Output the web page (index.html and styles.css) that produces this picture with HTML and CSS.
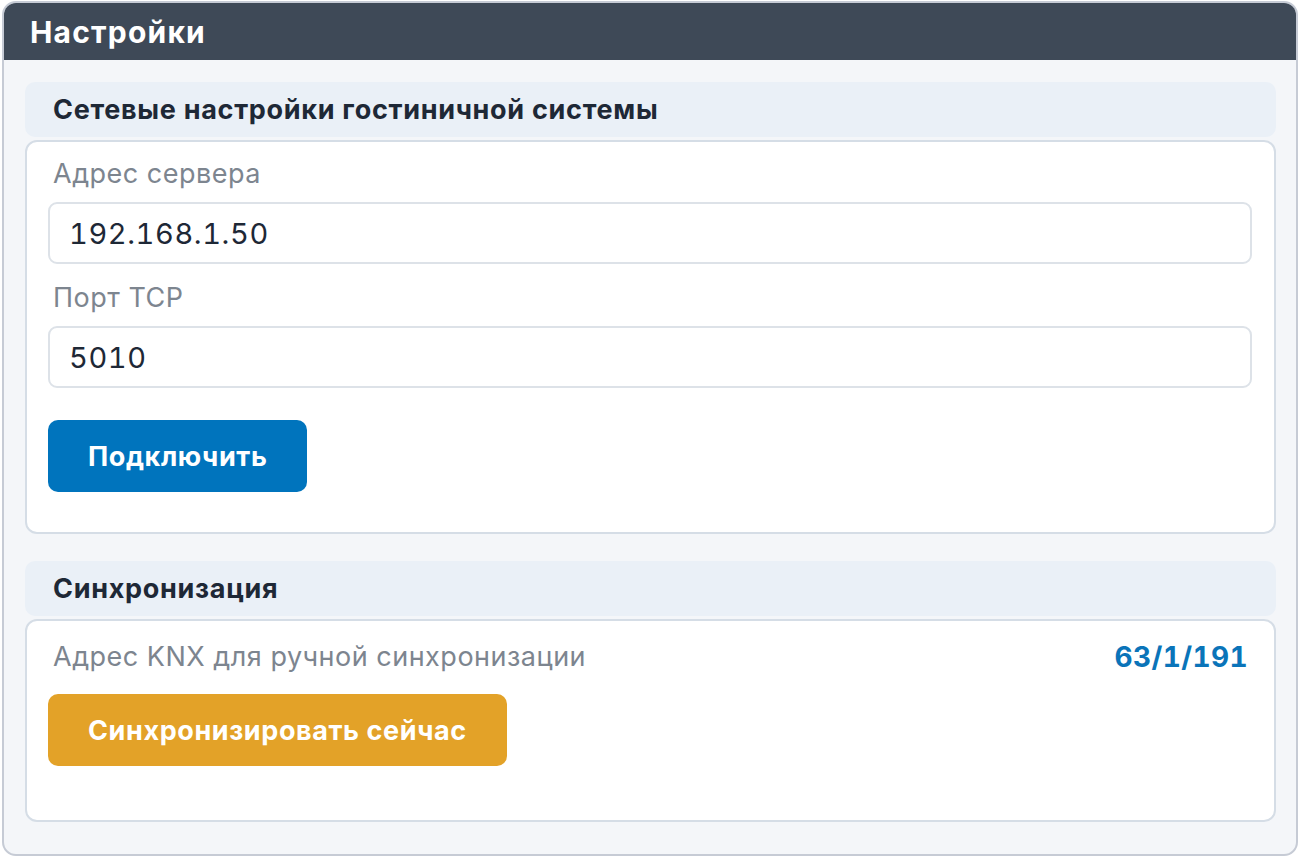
FILE: index.html
```html
<!DOCTYPE html>
<html lang="ru">

<head>
    <meta charset="UTF-8">
    <meta name="viewport" content="width=device-width, initial-scale=1.0">
    <title>Настройки</title>
    <link rel="stylesheet" href="styles.css">
</head>

<body>
    <div class="window">
        <div class="window-header">
            <h1>Настройки</h1>
        </div>

        <div class="window-body">
            <!-- Network section -->
            <div class="section">
                <div class="section-title">Сетевые настройки гостиничной системы</div>
                <div class="card">
                    <label class="field-label" for="serverAddr">Адрес сервера</label>
                    <input class="field-input" type="text" id="serverAddr" value="192.168.1.50" />

                    <label class="field-label" for="tcpPort">Порт TCP</label>
                    <input class="field-input" type="text" id="tcpPort" value="5010" />

                    <button class="btn btn-blue">Подключить</button>
                </div>
            </div>

            <!-- Sync section -->
            <div class="section">
                <div class="section-title">Синхронизация</div>
                <div class="card card-sync">
                    <div class="info-row">
                        <span class="field-label">Адрес KNX для ручной синхронизации</span>
                        <span class="knx-value">63/1/191</span>
                    </div>
                    <button class="btn btn-orange">Синхронизировать сейчас</button>
                </div>
            </div>
        </div>
    </div>
</body>

</html>
```

FILE: styles.css
```css
* {
    box-sizing: border-box;
}

body {
    margin: 0;
    padding: 1px 2px 2px 2px;
    font-family: Inter, "Noto Sans", sans-serif;
    background-color: #ffffff;
}

.window {
    height: 855px;
    border: 2px solid #c6cbd5;
    border-radius: 14px;
    background-color: #f4f6f9;
    overflow: hidden;
}

.window-header {
    height: 57px;
    background-color: #3e4957;
    padding: 0 26px;
    display: flex;
    align-items: center;
}

.window-header h1 {
    margin: 0;
    color: #ffffff;
    font-size: 30px;
    font-weight: 700;
    letter-spacing: 1.2px;
}

.window-body {
    padding: 22px 20px 0 21px;
}

.section {
    margin-bottom: 27px;
}

.section-title {
    height: 55px;
    background-color: #eaf0f7;
    border-radius: 10px;
    padding: 0 28px;
    display: flex;
    align-items: center;
    font-size: 27px;
    font-weight: 700;
    letter-spacing: 0.7px;
    color: #1e2836;
    margin-bottom: 3px;
}

.card {
    background-color: #ffffff;
    border: 2px solid #d5dde6;
    border-radius: 12px;
    padding: 16px 22px 40px 21px;
    display: flex;
    flex-direction: column;
    align-items: flex-start;
}

.card-sync {
    padding-top: 20px;
    height: 203px;
}

.field-label {
    color: #7d858f;
    font-size: 27px;
    line-height: 32px;
    letter-spacing: 0.5px;
    padding-left: 5px;
    margin-bottom: 12px;
}

.field-input {
    width: 100%;
    height: 62px;
    border: 2px solid #dde2e8;
    border-radius: 9px;
    padding: 0 19px;
    font-family: inherit;
    font-size: 29px;
    font-variant-numeric: tabular-nums;
    letter-spacing: 0.6px;
    color: #1e2836;
    margin-bottom: 18px;
}

.btn {
    height: 72px;
    border: none;
    border-radius: 10px;
    padding: 0 40px;
    font-family: inherit;
    font-size: 27px;
    font-weight: 700;
    letter-spacing: 0.6px;
    color: #ffffff;
    cursor: pointer;
}

.btn-blue {
    background-color: #0074bd;
    margin-top: 14px;
}

.btn-orange {
    background-color: #e3a228;
}

.info-row {
    width: 100%;
    display: flex;
    justify-content: space-between;
    align-items: flex-start;
    margin-bottom: 21px;
}

.info-row .field-label {
    margin-bottom: 0;
}

.knx-value {
    color: #0a74b9;
    font-size: 28px;
    line-height: 32px;
    font-weight: 700;
    font-variant-numeric: tabular-nums;
    letter-spacing: 0.4px;
    margin-right: 4px;
}
```
